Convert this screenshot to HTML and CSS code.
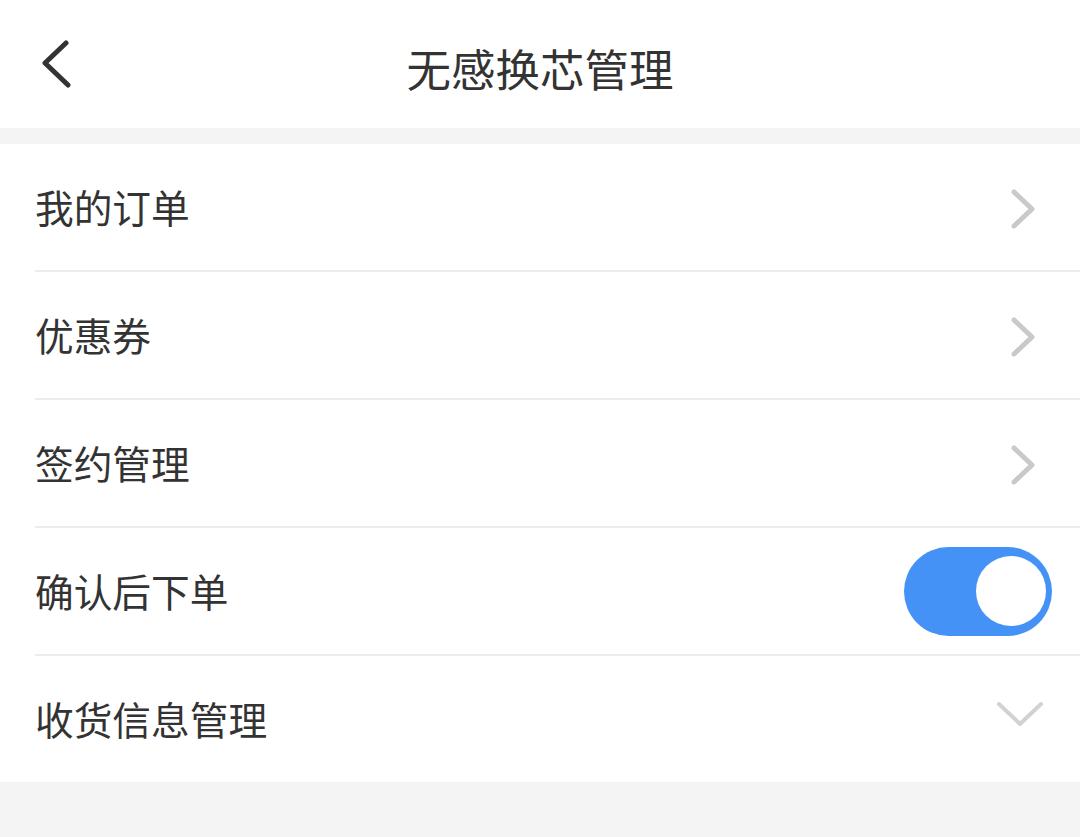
FILE: index.html
```html
<!DOCTYPE html>
<html>
<head>
    <meta charset="utf-8">
    <title>无感换芯管理</title>
    <link rel="stylesheet" href="styles.css">
</head>
<body>
    <header class="top-bar">
        <a class="back" href="#" aria-label="返回">
            <svg width="40" height="52" viewBox="0 0 40 52">
                <polyline points="26,3 5,23 28,45" fill="none" stroke="#333" stroke-width="5" stroke-linecap="round" stroke-linejoin="round"/>
            </svg>
        </a>
        <h1 class="title">无感换芯管理</h1>
    </header>

    <!-- Settings list -->
    <ul class="menu">
        <li class="menu-item">
            <span class="label">我的订单</span>
            <svg class="arrow" width="30" height="44" viewBox="0 0 30 44">
                <polyline points="9,7 27,24 9,41" fill="none" stroke="#c9c9c9" stroke-width="5" stroke-linecap="round" stroke-linejoin="round"/>
            </svg>
        </li>
        <li class="menu-item">
            <span class="label">优惠券</span>
            <svg class="arrow" width="30" height="44" viewBox="0 0 30 44">
                <polyline points="9,7 27,24 9,41" fill="none" stroke="#c9c9c9" stroke-width="5" stroke-linecap="round" stroke-linejoin="round"/>
            </svg>
        </li>
        <li class="menu-item">
            <span class="label">签约管理</span>
            <svg class="arrow" width="30" height="44" viewBox="0 0 30 44">
                <polyline points="9,7 27,24 9,41" fill="none" stroke="#c9c9c9" stroke-width="5" stroke-linecap="round" stroke-linejoin="round"/>
            </svg>
        </li>
        <li class="menu-item">
            <span class="label">确认后下单</span>
            <span class="switch on"><span class="knob"></span></span>
        </li>
        <li class="menu-item">
            <span class="label">收货信息管理</span>
            <svg class="arrow-down" width="50" height="30" viewBox="0 0 50 30">
                <polyline points="4,5 25,25 46,5" fill="none" stroke="#d2d2d2" stroke-width="4" stroke-linecap="round" stroke-linejoin="round"/>
            </svg>
        </li>
    </ul>
</body>
</html>
```

FILE: styles.css
```css
body {
    margin: 0;
    background-color: #f4f4f4;
    font-family: "Noto Sans CJK SC", "Noto Sans", sans-serif;
    color: #333;
}

.top-bar {
    position: relative;
    height: 128px;
    background-color: #fff;
    display: flex;
    align-items: center;
    justify-content: center;
}

.back {
    position: absolute;
    left: 40px;
    top: 40px;
    display: block;
}

.back svg {
    display: block;
}

.title {
    margin: 0;
    padding-top: 6px;
    font-size: 44.5px;
    font-weight: normal;
    color: #333;
}

/* --- Menu --- */
.menu {
    list-style: none;
    margin: 16px 0 0;
    padding: 0 0 0 35px;
    background-color: #fff;
}

.menu-item {
    height: 126px;
    display: flex;
    align-items: center;
    justify-content: space-between;
    border-bottom: 2px solid #ececec;
}

.menu-item:last-child {
    border-bottom: none;
}

.label {
    font-size: 38.7px;
    color: #333;
    margin-top: -2px;
}

.arrow {
    margin-right: 45px;
    display: block;
}

.arrow-down {
    margin-right: 35px;
    margin-top: -10px;
    display: block;
}

.switch {
    width: 148px;
    height: 89px;
    border-radius: 45px;
    background-color: #4592f6;
    margin-right: 28px;
    display: flex;
    align-items: center;
    justify-content: flex-end;
    padding-right: 6px;
    box-sizing: border-box;
}

.knob {
    width: 70px;
    height: 70px;
    border-radius: 50%;
    background-color: #fff;
}
```
